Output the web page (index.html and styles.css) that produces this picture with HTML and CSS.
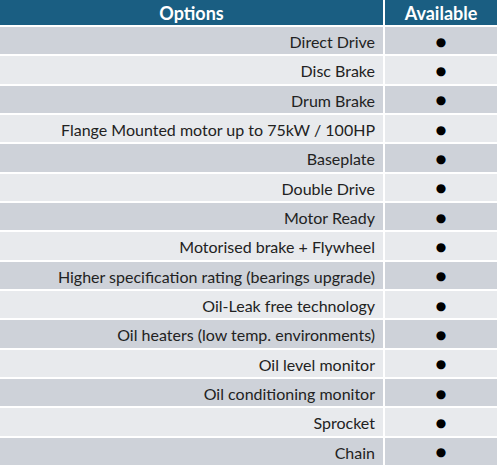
FILE: index.html
```html
<!DOCTYPE html>
<html>
<head>
<meta charset="utf-8">
<link rel="stylesheet" href="styles.css">
</head>
<body>
<div class="table">
  <div class="head opt">Options</div>
  <div class="head avail">Available</div>

  <div class="cell name odd">Direct Drive</div><div class="cell dot odd">●</div>
  <div class="cell name even">Disc Brake</div><div class="cell dot even">●</div>
  <div class="cell name odd">Drum Brake</div><div class="cell dot odd">●</div>
  <div class="cell name even">Flange Mounted motor up to 75kW / 100HP</div><div class="cell dot even">●</div>
  <div class="cell name odd">Baseplate</div><div class="cell dot odd">●</div>
  <div class="cell name even">Double Drive</div><div class="cell dot even">●</div>
  <div class="cell name odd">Motor Ready</div><div class="cell dot odd">●</div>
  <div class="cell name even">Motorised brake + Flywheel</div><div class="cell dot even">●</div>
  <div class="cell name odd">Higher specification rating (bearings upgrade)</div><div class="cell dot odd">●</div>
  <div class="cell name even">Oil-Leak free technology</div><div class="cell dot even">●</div>
  <div class="cell name odd">Oil heaters (low temp. environments)</div><div class="cell dot odd">●</div>
  <div class="cell name even">Oil level monitor</div><div class="cell dot even">●</div>
  <div class="cell name odd">Oil conditioning monitor</div><div class="cell dot odd">●</div>
  <div class="cell name even">Sprocket</div><div class="cell dot even">●</div>
  <div class="cell name odd">Chain</div><div class="cell dot odd">●</div>
</div>
</body>
</html>
```

FILE: styles.css
```css
html, body {
  margin: 0;
  padding: 0;
  background: #ffffff;
}

.table {
  display: grid;
  grid-template-columns: 383px 1fr;
  grid-template-rows: 25px repeat(15, 1fr);
  column-gap: 2px;
  row-gap: 2px;
  height: 465px;
  width: 497px;
  font-family: Lato, "Open Sans", sans-serif;
  background: #ffffff;
}

.head {
  background: #1a5e82;
  color: #ffffff;
  font-weight: 700;
  font-size: 18px;
  display: flex;
  align-items: center;
  justify-content: center;
}

.cell {
  display: flex;
  align-items: center;
  font-size: 16px;
  color: #222222;
  padding-top: 2px;
  box-sizing: border-box;
}

.odd { background: #ced2d9; }
.even { background: #e8eaed; }

.name {
  justify-content: flex-end;
  padding-right: 8px;
}

.dot {
  justify-content: center;
  font-family: "DejaVu Sans", sans-serif;
  font-size: 12px;
  color: #000000;
}
```
